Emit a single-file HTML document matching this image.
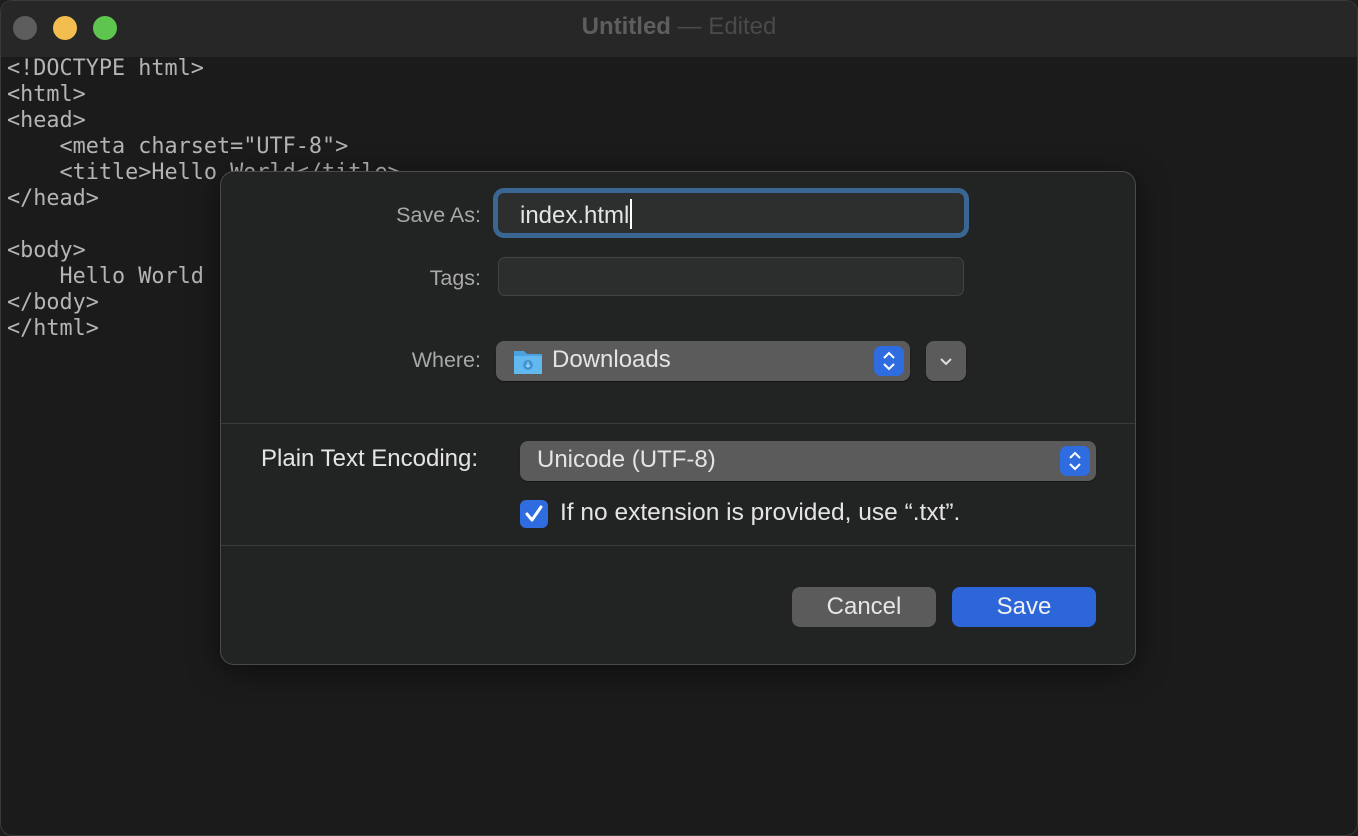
<!DOCTYPE html>
<html><head><meta charset="UTF-8"><style>
*{margin:0;padding:0;box-sizing:border-box}
body{width:1358px;height:836px;overflow:hidden;background:#1e1e1e;font-family:"Liberation Sans",sans-serif;position:relative}
.win{position:absolute;left:0;top:0;width:1358px;height:836px;border-radius:12px;overflow:hidden;background:#1b1b1b;border:1px solid #3a3a3a}
.tb{position:absolute;left:0;top:0;width:100%;height:56px;background:#272727}
.dot{position:absolute;top:15px;width:24px;height:24px;border-radius:50%}
.title{position:absolute;top:12px;left:0;width:100%;text-align:center;font-size:24px;font-weight:bold;color:#5e5e5e}
.title span{font-weight:normal;color:#4a4a4a}
pre{position:absolute;left:6px;top:55px;font-family:"DejaVu Sans Mono",monospace;font-size:21.8px;line-height:26px;color:#b4b4b4}
.dlg{position:absolute;left:220px;top:171px;width:916px;height:494px;background:#222323;border:1px solid #4b4b4b;border-radius:14px;box-shadow:0 6px 30px rgba(0,0,0,.5)}
.lbl{position:absolute;color:#a8a8a8;font-size:21.5px;text-align:right}
.a{position:absolute}
.txt{color:#e4e4e4;font-size:24px}
.pop{background:#5b5b5b;border-radius:8px;box-shadow:0 1px 1px rgba(0,0,0,.4)}
.stp{position:absolute;width:30px;height:30px;border-radius:7px;background:#2f6ce0}
.sep{position:absolute;left:0;width:100%;height:1px;background:#3b3b3b}
.cur{display:inline-block;width:2px;height:30px;background:#fff;vertical-align:-6px;margin-left:1px}
</style></head><body>
<div class="win">
<div class="tb">
<div class="dot" style="left:12px;background:#5d5d5d"></div>
<div class="dot" style="left:52px;background:#f4bd4f"></div>
<div class="dot" style="left:92px;background:#5ec64e"></div>
<div class="title">Untitled <span>— Edited</span></div>
</div>
<pre>&lt;!DOCTYPE html&gt;
&lt;html&gt;
&lt;head&gt;
    &lt;meta charset="UTF-8"&gt;
    &lt;title&gt;Hello World&lt;/title&gt;
&lt;/head&gt;

&lt;body&gt;
    Hello World
&lt;/body&gt;
&lt;/html&gt;</pre>
</div>
<div class="dlg">
<div class="lbl" style="left:60px;width:200px;top:31px">Save As:</div>
<div class="a" style="left:272px;top:16px;width:476px;height:50px;border:5px solid #3a6694;border-radius:11px;background:#2d2e2e"></div>
<div class="a txt" style="left:299px;top:27px">index.html<span class="cur"></span></div>
<div class="lbl" style="left:60px;width:200px;top:94px">Tags:</div>
<div class="a" style="left:277px;top:85px;width:466px;height:39px;border:1px solid #434343;border-radius:7px;background:#2c2d2d"></div>
<div class="lbl" style="left:60px;width:200px;top:176px">Where:</div>
<div class="a pop" style="left:275px;top:169px;width:414px;height:40px"></div>
<svg class="a" style="left:292px;top:176px" width="30" height="28" viewBox="0 0 30 28"><path d="M1 3h10l3 3h15v20H1z" fill="#4aa3e0"/><rect x="1" y="8" width="28" height="18" fill="#63b8ef"/><circle cx="15" cy="17" r="5" fill="#3f95d4"/><path d="M15 14v5M13 17l2 2 2-2" stroke="#9fd4f7" stroke-width="1.3" fill="none"/></svg>
<div class="a txt" style="left:331px;top:174px">Downloads</div>
<div class="stp" style="left:653px;top:174px"></div>
<svg class="a" style="left:653px;top:174px" width="30" height="30"><path d="M10 12l5-5 5 5M10 18l5 5 5-5" stroke="#fff" stroke-width="2" fill="none"/></svg>
<div class="a pop" style="left:705px;top:169px;width:40px;height:40px"></div>
<svg class="a" style="left:705px;top:169px" width="40" height="40"><path d="M15 18l5 5 5-5" stroke="#ddd" stroke-width="2" fill="none"/></svg>
<div class="sep" style="top:251px"></div>
<div class="a" style="left:40px;top:273px;color:#e4e4e4;font-size:24px">Plain Text Encoding:</div>
<div class="a pop" style="left:299px;top:269px;width:576px;height:40px"></div>
<div class="a txt" style="left:316px;top:274px">Unicode (UTF-8)</div>
<div class="stp" style="left:839px;top:274px"></div>
<svg class="a" style="left:839px;top:274px" width="30" height="30"><path d="M10 12l5-5 5 5M10 18l5 5 5-5" stroke="#fff" stroke-width="2" fill="none"/></svg>
<div class="a" style="left:299px;top:328px;width:28px;height:28px;border-radius:6px;background:#2f6ce0"></div>
<svg class="a" style="left:299px;top:328px" width="28" height="28"><path d="M7 14l5 6 9-13" stroke="#fff" stroke-width="3" fill="none" stroke-linecap="round" stroke-linejoin="round"/></svg>
<div class="a" style="left:339px;top:327px;color:#e4e4e4;font-size:24.5px">If no extension is provided, use “.txt”.</div>
<div class="sep" style="top:373px"></div>
<div class="a" style="left:571px;top:415px;width:144px;height:40px;border-radius:8px;background:#5b5b5b;color:#e6e6e6;font-size:24px;text-align:center;line-height:40px">Cancel</div>
<div class="a" style="left:731px;top:415px;width:144px;height:40px;border-radius:8px;background:#2d66d8;color:#f2f2f2;font-size:24px;text-align:center;line-height:40px">Save</div>
</div>
</body></html>
